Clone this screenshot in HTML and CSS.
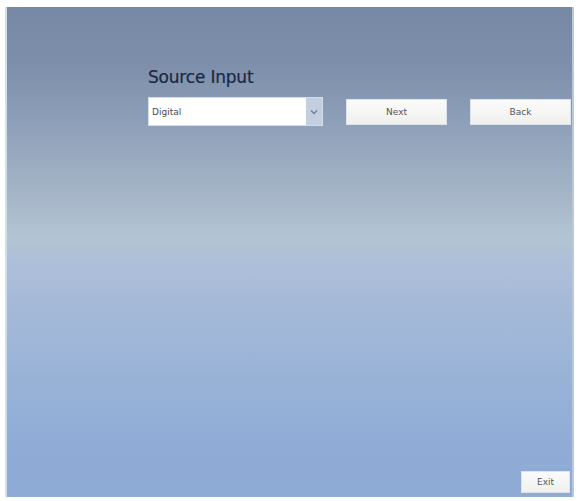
FILE: index.html
```html
<!DOCTYPE html>
<html>
<head>
<meta charset="utf-8">
<link rel="stylesheet" href="styles.css">
</head>
<body>
<div class="window">
  <div class="content">
    <h1 class="title">Source Input</h1>
    <div class="row">
      <div class="select">
        <span class="select-value">Digital</span>
        <span class="select-arrow">
          <svg width="8" height="6" viewBox="0 0 8 6"><path d="M1 1.5 L4 4.5 L7 1.5" fill="none" stroke="#6d7f98" stroke-width="1.3"/></svg>
        </span>
      </div>
      <button class="btn btn-next">Next</button>
      <button class="btn btn-back">Back</button>
    </div>
  </div>
  <div class="footer">
    <button class="btn btn-exit">Exit</button>
  </div>
</div>
</body>
</html>
```
FILE: styles.css
```css
html, body {
  margin: 0;
  padding: 0;
  background: #ffffff;
  width: 581px;
  height: 501px;
  overflow: hidden;
}
body {
  padding: 7px 0 0 5px;
  box-sizing: border-box;
  font-family: "DejaVu Sans", Verdana, sans-serif;
}
.window {
  width: 569px;
  height: 490px;
  box-sizing: border-box;
  display: flex;
  flex-direction: column;
  justify-content: space-between;
  border-left: 2px solid #cfe0e6;
  border-right: 2px solid #b9c8da;
  background: linear-gradient(to bottom,
    #7788a4 0%,
    #7e8fab 12%,
    #90a1ba 25%,
    #a3b3c6 37%,
    #b3c4d3 47%,
    #aebfd9 52%,
    #a6bad8 60%,
    #99b3d7 75%,
    #90acd6 90%,
    #8eabd5 100%);
}
.content {
  padding: 60px 0 0 141px;
}
.title {
  margin: 0 0 10px 0;
  font-size: 17px;
  font-weight: normal;
  color: #1a2842;
  line-height: 20px;
  letter-spacing: -0.2px;
  -webkit-text-stroke: 0.2px #1a2842;
}
.row {
  display: flex;
  align-items: center;
}
.select {
  width: 175px;
  height: 29px;
  background: #ffffff;
  display: flex;
  align-items: center;
  justify-content: space-between;
  box-sizing: border-box;
  border: 1px solid #d5dde8;
}
.select-value {
  font-size: 9px;
  color: #4a4a56;
  padding-left: 3px;
}
.select-arrow {
  width: 16px;
  height: 100%;
  background: #c3cfdf;
  display: flex;
  align-items: center;
  justify-content: center;
}
.btn {
  font-family: "DejaVu Sans", Verdana, sans-serif;
  font-size: 9px;
  color: #55565c;
  background: linear-gradient(to bottom, #fbfbfb, #f0f0ef);
  border: 1px solid #dde3ea;
  padding: 0;
  height: 26px;
  width: 101px;
  box-sizing: border-box;
}
.btn-next {
  margin-left: 23px;
}
.btn-back {
  margin-left: 23px;
}
.footer {
  display: flex;
  justify-content: flex-end;
  padding: 0 2px 4px 0;
}
.btn-exit {
  width: 49px;
  height: 22px;
}
```
